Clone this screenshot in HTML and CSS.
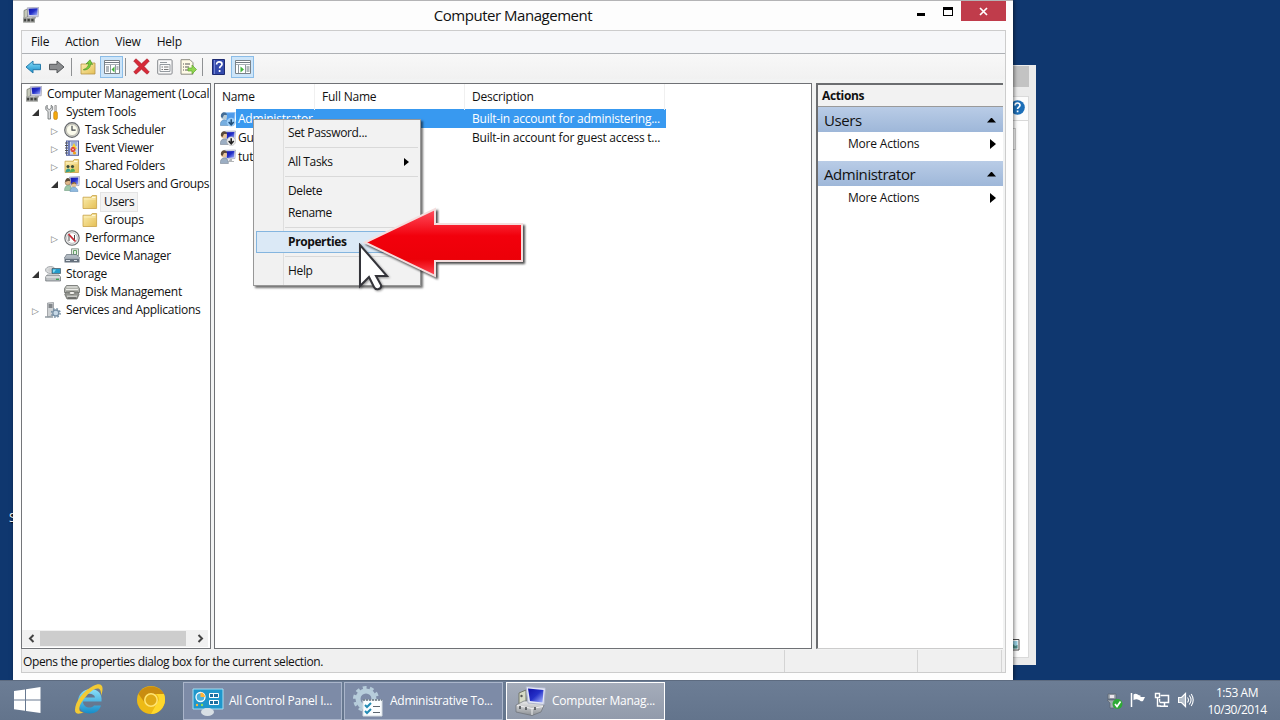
FILE: index.html
```html
<!DOCTYPE html>
<html lang="en">
<head>
<meta charset="utf-8">
<title>Computer Management</title>
<link rel="stylesheet" href="styles.css">
</head>
<body>
<svg class="defs" aria-hidden="true">
  <defs>
    <linearGradient id="screen" x1="0" y1="0" x2="1" y2="1"><stop offset="0" stop-color="#1212a8"/><stop offset=".5" stop-color="#2430c8"/><stop offset="1" stop-color="#a9b8ff"/></linearGradient>
    <linearGradient id="folder" x1="0" y1="0" x2="1" y2="1"><stop offset="0" stop-color="#fbeeb0"/><stop offset="1" stop-color="#e5bf55"/></linearGradient>
    <linearGradient id="red" x1="0" y1="0" x2="0" y2="1"><stop offset="0" stop-color="#ff5060"/><stop offset=".4" stop-color="#f2000c"/><stop offset=".75" stop-color="#ec0008"/><stop offset="1" stop-color="#ff4a58"/></linearGradient>
    <linearGradient id="blue" x1="0" y1="0" x2="0" y2="1"><stop offset="0" stop-color="#8be0fa"/><stop offset="1" stop-color="#168cc8"/></linearGradient>
    <linearGradient id="grey" x1="0" y1="0" x2="0" y2="1"><stop offset="0" stop-color="#ececec"/><stop offset="1" stop-color="#8b8f94"/></linearGradient>
  </defs>
  <symbol id="computer" viewBox="0 0 16 16">
    <path d="M1 3.500l3.500-1.500v8L1 11z" fill="#c6c9ba" stroke="#6c7064" stroke-width=".7"/>
    <path d="M4.300.8L15.800.2 15.200 9.800 5 9.500z" fill="#d5d5e6" stroke="#9294aa" stroke-width=".6"/>
    <path d="M5.500 1.800L14.700 1.200 14.200 8.300 6.300 8z" fill="url(#screen)"/>
    <path d="M9 10h4v1.500H9z" fill="#aaa"/>
    <path d="M.3 10.500h11.400v5.200H.3z" fill="#70736f"/><path d="M.5 10.900h11M.5 15.300h11" stroke="#cfcfcd" stroke-width=".8"/>
    <path d="M1.200 13h2m1.500 0h2m1.500 0h2" stroke="#2e302e" stroke-width="1.600"/><path d="M3.700 11v4m4-4v4" stroke="#bbb" stroke-width=".7"/>
  </symbol>
  <symbol id="tools" viewBox="0 0 16 16">
    <path d="M2.200 1.200v3l2 1.400 2-1.400v-3l1.500 1.400v3L5.500 7.500V15H3V7.500L.8 5.600v-3z" fill="#d7d9da" stroke="#6b6e70" stroke-width=".8"/>
    <path d="M9.800 1.500h1.500v6H9.800z" fill="#dedede" stroke="#777" stroke-width=".6"/><rect x="8.700" y="7.500" width="3.700" height="8" rx="1.600" fill="#f4a90c" stroke="#bd7805" stroke-width=".6"/>
  </symbol>
  <symbol id="clock" viewBox="0 0 16 16"><circle cx="8" cy="8" r="7.300" fill="#d9d8cf" stroke="#66696c" stroke-width="1.200"/><circle cx="8" cy="8" r="5.600" fill="#fbfbec" stroke="#a9aaa0" stroke-width=".6"/><path d="M8 3.700v4.500h3.600" fill="none" stroke="#41464c" stroke-width="1.200"/></symbol>
  <symbol id="event" viewBox="0 0 16 16"><rect x="2.500" y="1" width="12" height="14.300" fill="#ccd8f0" stroke="#5865a0"/><path d="M5 1v14" stroke="#4858a0" stroke-width="1.400"/><path d="M1 3h3M1 5.500h3M1 8h3M1 10.500h3M1 13h3" stroke="#555" stroke-width="1"/><path d="M7 3h6M7 5h6" stroke="#7187be"/><path d="M10 3L13 9H7z" fill="#f7d12e"/><circle cx="9" cy="9.500" r="2.500" fill="#d9332d"/><path d="M8 8.500l2 2m0-2L8 10.500" stroke="#fff" stroke-width=".7"/><circle cx="10.500" cy="13" r="1.600" fill="#f0a31d"/></symbol>
  <symbol id="folder-icon" viewBox="0 0 16 16"><path d="M1 3.200h8l1.200-1.700h4.400v13H1z" fill="url(#folder)" stroke="#c8a146" stroke-width=".8"/><path d="M10 3.400h3.500" stroke="#fffbe4"/><path d="M1.800 5h11.800" stroke="#fff4c3" stroke-width=".8"/></symbol>
  <symbol id="shared" viewBox="0 0 16 16"><use href="#folder-icon"/><circle cx="4" cy="8.500" r="1.600" fill="#3b4a38"/><path d="M1.500 14.500c0-5 5-5 5-1z" fill="#3a9f8c"/><circle cx="8.500" cy="8.500" r="1.600" fill="#3b4a38"/><path d="M6 14.500c0-5 5-5 5-1z" fill="#53ae58"/></symbol>
  <symbol id="group" viewBox="0 0 16 16"><path d="M5.500 1L15.500.5 15 9.500 6 10z" fill="#e4e5f0" stroke="#8790a7" stroke-width=".6"/><path d="M6.500 1.800L14.300 1.500 14 8.500 7 9z" fill="url(#screen)"/><circle cx="3.800" cy="6.500" r="2.700" fill="#dfb789" stroke="#796249" stroke-width=".5"/><path d="M1.200 6c0-5 5-5 5-1L4 5z" fill="#5c4a36"/><path d="M.5 14.500c0-7 7-7 7.500 0z" fill="#9dc6a6" stroke="#5f9173" stroke-width=".5"/><circle cx="9.800" cy="9" r="2.500" fill="#e7c495"/><path d="M7.500 8.500c0-3.500 5-3.500 5 0l-2-1z" fill="#8b673d"/><path d="M6 15.500c0-6 7.500-6 8 0z" fill="#8eb9df" stroke="#5689b6" stroke-width=".5"/></symbol>
  <symbol id="perf" viewBox="0 0 16 16"><circle cx="8" cy="8" r="7.200" fill="#eee" stroke="#65686b" stroke-width="1.100"/><circle cx="8" cy="8" r="5.300" fill="#fff" stroke="#999" stroke-width=".6"/><path d="M5 11V5l5.500 6V5" fill="none" stroke="#333" stroke-width=".9"/><path d="M4.500 4l7 7.500" stroke="#cc2a35" stroke-width="1.700"/></symbol>
  <symbol id="device" viewBox="0 0 16 16"><path d="M7.500.8h7v7h-7z" fill="#e6eee4" stroke="#748277" stroke-width=".8"/><path d="M9.500 2.500h3v4h-3z" fill="none" stroke="#67a269"/><path d="M2.500 6.500h10l3 3.500H.5z" fill="#b2bac2" stroke="#56616c" stroke-width=".6"/><path d="M.5 9.500h15v5H.5z" fill="#66717d"/><path d="M1 10h14M2 12.500h4m4 0h3" stroke="#dce2e8"/></symbol>
  <symbol id="storage" viewBox="0 0 16 16"><ellipse cx="5.500" cy="4" rx="5" ry="3.500" fill="#d8dadb" stroke="#8d9195" stroke-width=".7"/><circle cx="5" cy="4" r="1" fill="#fff" stroke="#888" stroke-width=".4"/><path d="M7 2.500h8.500v5H7z" fill="#249bcb" stroke="#47565e" stroke-width=".7"/><path d="M8 3.500h3l-2 3H8z" fill="#82dcf5"/><path d="M2 9h12l1.500 2v4H.7v-4z" fill="#bcc0c3" stroke="#666b70" stroke-width=".7"/><path d="M1 11h14" stroke="#f3f3f3"/><path d="M11 13.300h3" stroke="#39a34d" stroke-width="1.300"/></symbol>
  <symbol id="disk" viewBox="0 0 16 16"><path d="M2.500 1.500h11l2 3v4H.5v-4z" fill="#b1b3ad" stroke="#6b6d69" stroke-width=".8"/><path d="M2.500 3h11M2 5.500h12" stroke="#ecece8"/><path d="M2 8h12l1 2.500-2 4.500H3L.8 10.500z" fill="#92948f" stroke="#60625d" stroke-width=".7"/><ellipse cx="8" cy="9" rx="3" ry="1.600" fill="#f1f1ed" stroke="#5b5d58" stroke-width=".7"/><path d="M3 12.200h10" stroke="#e3e3df"/><path d="M4 14h8" stroke="#555"/></symbol>
  <symbol id="services" viewBox="0 0 16 16"><path d="M2.500 1l6-.5v13L2.500 15z" fill="#ced1d3" stroke="#888d91" stroke-width=".7"/><path d="M3.500 3h4M3.500 5h4" stroke="#343a40"/><path d="M0 15h8" stroke="#929ba2" stroke-width="1.500"/><circle cx="10.800" cy="11" r="3" fill="#c7d9e7" stroke="#7790a5" stroke-width="1.300"/><circle cx="10.800" cy="11" r="4.300" fill="none" stroke="#7790a5" stroke-dasharray="1.700 1.680" stroke-width="1.400"/></symbol>
  <symbol id="user" viewBox="0 0 16 16"><path d="M4.500 1.300L15.500 1 15 9.500 6 10z" fill="#e8e9f4" stroke="#9299b0" stroke-width=".6"/><path d="M6 2.200L14.500 1.900 14 8.600 6.800 9z" fill="url(#screen)"/><path d="M10 10h2v2h2v1H8z" fill="#b3b6b8"/><circle cx="4" cy="5.500" r="3" fill="#e8c59c"/><path d="M1 6c-1-6 6-6 6-2L4 4 2.500 7z" fill="#5b4a3b"/><path d="M.4 14.500c-1-7 8-8 8 0z" fill="#9caec3" stroke="#6c7886" stroke-width=".5"/></symbol>
  <symbol id="user-off" viewBox="0 0 16 16"><use href="#user"/><circle cx="11.200" cy="11.200" r="4.400" fill="#eee" stroke="#aaa" stroke-width=".5"/><path d="M11.200 8.200v5M8.700 11l2.500 2.700 2.500-2.700" fill="none" stroke="#222" stroke-width="1.600"/></symbol>
  <symbol id="user-selected" viewBox="0 0 16 16"><path d="M4.500 1.300L15.500 1 15 9.500 6 10z" fill="#8fc2f5"/><path d="M6 2.200L14.500 1.900 14 8.600 6.800 9z" fill="#4f9bea"/><circle cx="4" cy="5.500" r="3" fill="#b8cbd6"/><path d="M1 6c-1-6 6-6 6-2L4 4 2.500 7z" fill="#446d96"/><path d="M.4 14.500c-1-7 8-8 8 0z" fill="#76aee0" stroke="#4e81ad" stroke-width=".5"/><circle cx="11.200" cy="11.200" r="4.400" fill="#9bcdf8"/><path d="M11.200 8.200v5M8.700 11l2.500 2.700 2.500-2.700" fill="none" stroke="#22517d" stroke-width="1.600"/></symbol>
  <symbol id="arrow" viewBox="0 0 17 16"><path d="M1 8l7-6v3.300h7.500v5.400H8V14z" stroke-width="1"/></symbol>
  <symbol id="pane" viewBox="0 0 16 16"><path d="M.5 1.500h15v13H.5z" fill="#fff" stroke="#7a8288"/><path d="M1 3.500h14" stroke="#737b83"/><path d="M1 5.500h14" stroke="#a9b1b7"/></symbol>
</svg>

<main class="desktop">
  <span class="shortcut">S</span>
  <section class="back-window">
    <div class="back-top"></div>
    <div class="back-body">
      <div class="back-help"><svg width="15" height="15" viewBox="0 0 15 15"><circle cx="7.500" cy="7.500" r="7.300" fill="#1d6fb8"/><path d="M5 5.500c0-3.300 5-3.300 5-.2 0 1.900-2.400 1.700-2.400 3.700M7.600 10.400v1.800" stroke="#fff" stroke-width="1.700" fill="none"/></svg></div>
      <div class="back-field"></div>
      <svg class="thumb" width="12" height="12" viewBox="0 0 12 12"><path d="M.5.5h10.500v10.500H.5z" fill="#fff" stroke="#4c4c4c"/><path d="M2 2h7.500v7.500H2z" fill="#9ad3e6"/><path d="M2 9l3-4 2 2 2.500-1v3.500H2z" fill="#4d8983"/></svg>
    </div>
  </section>

  <section class="window">
    <header class="titlebar">
      <svg class="i16"><use href="#computer"/></svg>
      <h1>Computer Management</h1>
      <div class="controls">
        <span class="min"></span><span class="max"></span>
        <span class="close"><svg width="9" height="9" viewBox="0 0 9 9"><path d="M1 1l7 7M8 1L1 8" stroke="#fff" stroke-width="1.700"/></svg></span>
      </div>
    </header>
    <div class="frame">
      <nav class="menubar"><span>File</span><span>Action</span><span>View</span><span>Help</span></nav>
      <div class="toolbar">
        <svg class="tool back" width="17" height="16"><use href="#arrow"/></svg>
        <svg class="tool forward" width="17" height="16" viewBox="0 0 17 16"><path d="M16 8L9 2v3.300H1.500v5.400H9V14z"/></svg>
        <i class="divider d1"></i>
        <svg class="tool up" width="16" height="16" viewBox="0 0 16 16"><path d="M1 5h5l1-1h8v11H1z" fill="url(#folder)" stroke="#b69646" stroke-width=".8"/><path d="M3.500 10.500c3.500-1 5-3 5-6l-2.500.5L10 .8l2.500 4.700-2-.5c0 4-3 6-7 6z" fill="#75ce3c" stroke="#50942a" stroke-width=".7"/></svg>
        <span class="toggle"><svg class="i16"><use href="#pane"/><path d="M6.500 6v8M11.500 6v8" stroke="#8f979d"/><path d="M2 8h3M2 10h3M2 12h3M12.500 8h2M12.500 10h2" stroke="#657078"/><path d="M10.500 7.500v6L7.500 10.500z" fill="#42b539" /></svg></span>
        <i class="divider d2"></i>
        <svg class="tool delete" width="17" height="17" viewBox="0 0 17 17"><path d="M3 .8l5.500 5L14 .8l2.300 2.200-5.200 5.500 5.200 5.500-2.300 2.200-5.500-5-5.500 5L.7 14l5.200-5.500L.7 3z" fill="#d62a38" stroke="#a61625" stroke-width=".6"/></svg>
        <svg class="tool props" width="16" height="16" viewBox="0 0 16 16"><rect x=".7" y=".7" width="14.400" height="14.400" rx="1" fill="#fafafa" stroke="#83878b"/><path d="M3 3.500h7M3 5.500h10v7H3z" fill="none" stroke="#949a9f"/><path d="M4.500 8h1.500m1 0h4.500M4.500 10.500H6m1 0h4.500" stroke="#777"/></svg>
        <svg class="tool export" width="17" height="16" viewBox="0 0 17 16"><path d="M1 .7h9l3 3v11.500H1z" fill="#fffbe6" stroke="#8b8b80"/><path d="M3 5h1m1 0h5M3 8h1m1 0h4M3 11h1m1 0h4" stroke="#555"/><path d="M8 9h4V6l4.500 4.500L12 15v-3H8z" fill="#91d650" stroke="#60a72e" stroke-width=".7"/></svg>
        <i class="divider d3"></i>
        <svg class="tool help" width="13" height="16" viewBox="0 0 13 16"><path d="M.5.5h12v15H.5z" fill="#344aac" stroke="#1e2b71"/><path d="M2.500 1v14" stroke="#7183d2"/><path d="M4.600 5.500c0-3.800 5.400-3.300 5.400-.3 0 2-2.400 2-2.400 4M7.600 11v2" fill="none" stroke="#fff" stroke-width="1.700"/></svg>
        <span class="toggle"><svg class="i16"><use href="#pane"/><path d="M3.500 6v8M10.500 6v8" stroke="#8f979d"/><path d="M11.500 8h3M11.500 10h3M11.500 12h3" stroke="#657078"/><path d="M5.500 7.500v6l3.500-3z" fill="#42b539"/></svg></span>
      </div>

      <div class="panes">
        <aside class="tree">
          <ul>
            <li class="l0"><svg class="i16"><use href="#computer"/></svg><span>Computer Management (Local</span></li>
            <li class="l1"><i class="open"></i><svg class="i16"><use href="#tools"/></svg><span>System Tools</span></li>
            <li class="l2"><i class="shut"></i><svg class="i16"><use href="#clock"/></svg><span>Task Scheduler</span></li>
            <li class="l2"><i class="shut"></i><svg class="i16"><use href="#event"/></svg><span>Event Viewer</span></li>
            <li class="l2"><i class="shut"></i><svg class="i16"><use href="#shared"/></svg><span>Shared Folders</span></li>
            <li class="l2 tight"><i class="open"></i><svg class="i16"><use href="#group"/></svg><span>Local Users and Groups</span></li>
            <li class="l3 current"><svg class="i16"><use href="#folder-icon"/></svg><span>Users</span></li>
            <li class="l3"><svg class="i16"><use href="#folder-icon"/></svg><span>Groups</span></li>
            <li class="l2"><i class="shut"></i><svg class="i16"><use href="#perf"/></svg><span>Performance</span></li>
            <li class="l2"><i></i><svg class="i16"><use href="#device"/></svg><span>Device Manager</span></li>
            <li class="l1"><i class="open"></i><svg class="i16"><use href="#storage"/></svg><span>Storage</span></li>
            <li class="l2"><i></i><svg class="i16"><use href="#disk"/></svg><span>Disk Management</span></li>
            <li class="l1"><i class="shut"></i><svg class="i16"><use href="#services"/></svg><span>Services and Applications</span></li>
          </ul>
          <div class="scrollbar">
            <svg width="18" height="15" viewBox="0 0 18 15"><path d="M11.500 4L8 7.500 11.500 11" fill="none" stroke="#444" stroke-width="2"/></svg>
            <div class="track"><div class="handle"></div></div>
            <svg width="18" height="15" viewBox="0 0 18 15"><path d="M8.500 4L12 7.500 8.500 11" fill="none" stroke="#444" stroke-width="2"/></svg>
          </div>
        </aside>

        <section class="list">
          <div class="row head"><span>Name</span><span>Full Name</span><span>Description</span></div>
          <div class="row selected"><span class="name"><svg class="i16"><use href="#user-selected"/></svg><b>Administrator</b></span><span></span><span>Built-in account for administering...</span></div>
          <div class="row"><span class="name"><svg class="i16"><use href="#user-off"/></svg><b>Guest</b></span><span></span><span>Built-in account for guest access t...</span></div>
          <div class="row"><span class="name"><svg class="i16"><use href="#user"/></svg><b>tutorial</b></span><span></span><span></span></div>
        </section>

        <aside class="actions">
          <h2>Actions</h2>
          <h3><span>Users</span><i class="up-mark"></i></h3>
          <p><span>More Actions</span><i class="right-mark"></i></p>
          <h3><span>Administrator</span><i class="up-mark"></i></h3>
          <p><span>More Actions</span><i class="right-mark"></i></p>
        </aside>
      </div>
      <footer class="status"><span class="message">Opens the properties dialog box for the current selection.</span><span class="cell"></span><span class="cell last"></span></footer>
    </div>
  </section>

  <div class="context-menu">
    <div class="item">Set Password...</div><hr>
    <div class="item">All Tasks<i class="right-mark small"></i></div><hr>
    <div class="item">Delete</div>
    <div class="item">Rename</div><hr>
    <div class="item default">Properties</div><hr>
    <div class="item">Help</div>
  </div>

  <svg class="pointer-arrow" width="176" height="82" viewBox="0 0 176 82">
    <path d="M7 37.500L77 4v15h87v37H77v15z" fill="url(#red)" stroke="#f4dede" stroke-width="2"/>
  </svg>
  <svg class="cursor" width="34" height="50" viewBox="0 0 34 50">
    <path d="M2 2v41l9-9 5 10c2 4 8 2 7-2l-5-9h11z" fill="#fff" stroke="#34343a" stroke-width="2"/>
  </svg>

  <footer class="taskbar">
    <svg class="start" width="27" height="27" viewBox="0 0 27 27"><path d="M0 4l11-1.600v10.100H0zM12 2.200L26.500 0v12.500H12zM0 13.500h11v10.300L0 22.300zM12 13.500h14.500V26L12 24z" fill="#fff"/></svg>
    <svg class="ie" width="30" height="32" viewBox="0 0 30 32"><path d="M9 18.500h18.500C28.500 10 23 6 16.500 6S4 11 4 18.500 9 30.500 16 30.500c5.500 0 9.500-3 11-8h-7c-3 4-11 2-11-4z" fill="url(#blue)"/><path d="M10 14.500h11c-1-5-10-5-11 0z" fill="#66778f"/><path d="M27 13C31 2 27-1 19 3 9 8 1 19 1 27c0 5 5 4 9 2-7 1.500-6-7 2-15.500C19 5 28 1 27 13z" fill="#f2ca35"/></svg>
    <svg class="chrome" width="30" height="30" viewBox="0 0 30 30"><circle cx="15" cy="15" r="14" fill="#edba15"/><path d="M2.500 9C7-1 23-1 28 9H15c-5 0-8 4-6 9z" fill="#c98c10"/><path d="M15 29l6-11c3-3 2-7-1-9h8c4 10-4 20-13 20z" fill="#ffd82c"/><circle cx="15" cy="15" r="6.200" fill="#dfa915" stroke="#ffe472" stroke-width="1.500"/></svg>
    <div class="tasks">
      <div class="task">
        <svg width="32" height="32" viewBox="0 0 32 32"><path d="M1 4h30v20H1z" fill="#1f96cb" stroke="#a6def3"/><circle cx="8.500" cy="12" r="4.500" fill="#4ab1dc" stroke="#fff" stroke-width="1.300"/><path d="M8.500 12V7.500a4.500 4.500 0 014.500 4.500z" fill="#ffb436"/><path d="M17.500 8.500h9v4h-9zM17.500 15.500h9v4h-9z" fill="#1d6e9f" stroke="#fff"/><path d="M21.500 8.500v4m0 3v4" stroke="#fff"/><circle cx="5" cy="20" r="1.200" fill="#ffb436"/><circle cx="10" cy="20" r="1.200" fill="#92df58"/><path d="M13 23h5l1 3H12z" fill="#c2d1da"/><ellipse cx="15.500" cy="27" rx="6.500" ry="4" fill="#d8dfe4"/></svg>
        <span>All Control Panel I...</span>
      </div>
      <div class="task">
        <svg width="32" height="32" viewBox="0 0 32 32"><circle cx="13" cy="14" r="8" fill="none" stroke="#b7cddb" stroke-width="5"/><circle cx="13" cy="14" r="11.500" fill="none" stroke="#b7cddb" stroke-width="3" stroke-dasharray="3.800 3.430"/><path d="M10 15h19v16H10z" fill="#fafdff" stroke="#d6dde2"/><path d="M10 15h19" stroke="#677680" stroke-width="1.500" stroke-dasharray="2 1"/><path d="M12 20l2 2 4-4m-6 8l2 2 4-4" fill="none" stroke="#248bb4" stroke-width="2"/><path d="M20 21.500h7m-7 6h7" stroke="#5b6670"/></svg>
        <span>Administrative To...</span>
      </div>
      <div class="task active">
        <svg width="32" height="32" viewBox="0 0 32 32"><path d="M4 8l7-3v14l-7 3z" fill="#d8dcc7" stroke="#72776a"/><circle cx="6.500" cy="11" r="1.200" fill="#555"/><path d="M1 20l8-4h15l5 4-3 7-9 3.500L1 27z" fill="url(#grey)" stroke="#6b7077" stroke-width=".7"/><path d="M2 20.500l15 3 11-2M17 24v6" stroke="#f1f1f1" fill="none"/><path d="M5 21v3m6-2v3m9-3v3" stroke="#45494d" stroke-width="1.500"/><path d="M11 1.500L30.500 3 29 19.500 13 18z" fill="#e5e8f5" stroke="#aeb5cb"/><path d="M13 3.500L28.500 5 27.500 17.500 15 16z" fill="url(#screen)"/></svg>
        <span>Computer Manag...</span>
      </div>
    </div>
    <div class="tray">
      <svg width="17" height="18" viewBox="0 0 17 18"><path d="M2 2h8v5H2zM1 8h9l-2 3v5H4v-5z" fill="#a3abb2" stroke="#59636e" stroke-width=".7"/><path d="M4 3h4v3H4z" fill="#ece6ee"/><circle cx="11.500" cy="12" r="5" fill="#2eaa35"/><path d="M9 12l2 2.500 3.500-5" stroke="#fff" stroke-width="1.700" fill="none"/></svg>
      <svg width="17" height="16" viewBox="0 0 17 16"><path d="M1.500 1v14" stroke="#fff" stroke-width="1.500"/><path d="M3.500 2.500c3-2 4 1 7 1v1.500h4.500l-2 4c-2 1-3-.5-4-1-2-1-3-1-5.500 0z" fill="#fff"/></svg>
      <svg width="17" height="16" viewBox="0 0 17 16"><path d="M6.500 3.500h8v7h-9V7M10.500 11v3M6 14.300h8" fill="none" stroke="#fff" stroke-width="1.500"/><path d="M1.500 1.500h4v4h-4zM3.500 5.500V14H7" fill="#68778b" stroke="#fff" stroke-width="1.400"/></svg>
      <svg width="17" height="16" viewBox="0 0 17 16"><path d="M.5 5.500h3L7.500 1.500v13l-4-4h-3z" fill="#b3bdc9" stroke="#fff" stroke-width="1.200"/><path d="M9.500 5.500q2 2.500 0 5M11.300 3.500q3.500 4.500 0 9M13.200 2q4 6 0 12" fill="none" stroke="#fff" stroke-width="1.100"/></svg>
    </div>
    <div class="clock"><span>1:53 AM</span><span>10/30/2014</span></div>
  </footer>
</main>
</body>
</html>
```
FILE: styles.css
```css
* { box-sizing: border-box; }
body { margin: 0; overflow: hidden; font: 12px/18px "Open Sans", "Noto Sans", sans-serif; letter-spacing: -0.28px; color: #111; }
.defs { position: absolute; width: 0; height: 0; }
svg { display: block; flex: none; }
h1, h2, h3, p, ul { margin: 0; padding: 0; font-weight: normal; }
.i16 { width: 16px; height: 16px; }
.desktop { position: relative; width: 1280px; height: 720px; overflow: hidden; background: #0f376f; white-space: nowrap; }
.shortcut { position: absolute; left: 9px; top: 509px; color: #fff; text-shadow: 1px 1px 1px #000; }

.back-window { position: absolute; left: 1000px; top: 65px; width: 36px; height: 600px; padding-right: 7px; background: #ebebeb; }
.back-top { height: 21px; margin-top: 1px; background: #c3c3c3; }
.back-body { display: flex; flex-direction: column; height: 562px; margin-top: 9px; background: #fff; border: 1px solid #dadada; padding-left: 9px; }
.back-help { height: 24px; margin-left: -9px; padding: 3px 0 0 9px; border-bottom: 1px solid #d9d9d9; background: #fcfcfc; }
.back-field { width: 6px; height: 22px; margin-top: 7px; border: 1px solid #d0d0d0; }
.thumb { margin: auto 0 6px -2px; }

.window { position: absolute; left: 13px; top: 0; width: 1000px; height: 680px; padding: 0 8px; background: #fdfdfd; border-top: 1px solid #b4b4b6; box-shadow: 1px 0 4px rgba(0,0,0,.55); }
.titlebar { display: flex; height: 29px; padding-left: 2px; }
.titlebar .i16 { margin-top: 6px; }
.titlebar h1 { flex: 1; padding: 4px 0 0 70px; text-align: center; font-size: 15px; line-height: 20px; letter-spacing: -0.47px; }
.controls { display: flex; }
.min { width: 8px; height: 3px; margin: 12px 18px 0 0; background: #000; }
.max { width: 10px; height: 9px; margin: 6px 8px 0 0; border: 1px solid #000; border-top-width: 3px; }
.close { display: grid; place-items: center; width: 45px; height: 20px; margin-right: -1px; background: #c03c4b; }

.frame { display: flex; flex-direction: column; height: 643px; border: 1px solid #ccc; background: #f2f3f3; margin-right: -1px; }
.menubar { display: flex; flex: none; height: 23px; padding: 2px 9px 0; gap: 16px; border-bottom: 1px solid #aeb1b5; background: #f6f7f9; letter-spacing: -0.2px; }
.toolbar { display: flex; flex: none; align-items: center; height: 25px; padding-left: 3px; background: linear-gradient(#f8f8f8, #f1f1f1); }
.back { fill: url(#blue); stroke: #267baa; }
.forward { fill: #8b8d8f; stroke: #55585b; margin-left: 6px; }
.divider { width: 1px; height: 18px; background: #8f9193; }
.d1 { margin: 0 8px 0 6px; }
.up { margin-right: 4px; }
.toggle { display: grid; place-items: center; width: 23px; height: 22px; background: #cde5f9; border: 1px solid #8bbde8; }
.d2 { margin: 0 7px 0 2px; }
.props { margin-left: 7px; }
.export { margin-left: 7px; }
.d3 { margin: 0 9px 0 5px; }
.help { margin-right: 6px; }

.panes { display: flex; flex: none; height: 566px; margin: 4px 0 0 -1px; }
.tree { display: flex; flex-direction: column; width: 190px; border: 1px solid #74767a; background: #fff; overflow: hidden; }
.tree ul { flex: 1; list-style: none; padding-top: 1px; }
.tree li { display: flex; align-items: center; height: 18px; }
.tree li > span { margin-left: 5px; }
.tree .l0 { padding-left: 4px; }
.tree .l1 { padding-left: 9px; }
.tree .l2 { padding-left: 28px; }
.tree .l3 { padding-left: 60px; }
.tree .tight { letter-spacing: -0.4px; }
.tree i { flex: none; width: 14px; height: 8px; }
.tree .l3 > span { margin-left: 3px; padding: 0 3px; }
.tree .current > span { background: #f3f3f3; box-shadow: 0 0 0 1px #e4e4e4; }
.open::before { content: ""; display: block; width: 7px; height: 7px; margin: 1px 0 0 1px; background: #333; clip-path: polygon(100% 0, 100% 100%, 0 100%); }
.shut::before { content: "▷"; display: block; padding: 1px 0 0 1px; font: 9px/9px "DejaVu Sans", sans-serif; color: #777; }
.scrollbar { display: flex; height: 17px; margin: 0 2px 1px 0; background: #f1f1f1; align-items: center; }
.track { flex: 1; }
.handle { width: 146px; height: 15px; background: #cdcdcd; }

.list { width: 598px; margin-left: 3px; border: 1px solid #6f7175; background: #fff; }
.row { display: grid; grid-template-columns: 100px 150px 200px; width: 451px; height: 19px; line-height: 19px; letter-spacing: -0.22px; }
.row > span { padding-left: 7px; }
.row.head { height: 25px; line-height: 26px; }
.row.head > span { border-right: 1px solid #f0f0f0; }
.row > .name { display: flex; align-items: center; padding-left: 5px; }
.name b { font-weight: normal; margin-left: 2px; }
.row.selected { color: #fff; background: linear-gradient(90deg, #fff 21px, #3899f0 21px); }

.actions { width: 187px; margin-left: 4px; border-left: 2px solid #6b6d70; border-top: 2px solid #6b6d70; border-bottom: 1px solid #ccc; background: #fff; }
.actions h2 { height: 22px; padding: 2px 4px; font-size: 12px; font-weight: bold; letter-spacing: -0.35px; background: #f2f2f2; border-bottom: 1px solid #9a9a9a; }
.actions h3 { display: flex; justify-content: space-between; align-items: center; height: 25px; padding: 1px 7px 0 6px; font-size: 15px; letter-spacing: -0.43px; background: linear-gradient(#b9cce6, #9eb7d9); }
.actions p { display: flex; justify-content: space-between; height: 29px; padding: 3px 7px 0 30px; letter-spacing: -0.2px; }
.up-mark { width: 9px; height: 5px; background: #000; clip-path: polygon(50% 0, 100% 100%, 0 100%); }
.right-mark { width: 6px; height: 10px; margin-top: 4px; background: #000; clip-path: polygon(0 0, 100% 50%, 0 100%); }

.status { display: flex; flex: 1; margin-top: 1px; line-height: 23px; background: #f0f0f0; }
.message { width: 763px; height: 22px; padding-left: 1px; border-right: 1px solid #d4d4d4; letter-spacing: -0.37px; }
.cell { width: 133px; border-right: 1px solid #d4d4d4; }
.cell.last { width: 84px; }

.context-menu { position: absolute; left: 253px; top: 119px; width: 168px; height: 167px; padding: 2px; border: 1px solid #979797; background: linear-gradient(90deg, #f1f1f1 29px, #dedede 29px, #dedede 30px, #f2f2f2 30px); box-shadow: 2px 2px 2px rgba(0,0,0,.55); }
.item { display: flex; justify-content: space-between; height: 22px; padding: 0 9px 0 32px; line-height: 22px; letter-spacing: -0.35px; }
.context-menu hr { height: 1px; margin: 3px 0 3px 29px; border: 0; background: #d9d9d9; }
.item.default { font-weight: bold; padding-left: 31px; border: 1px solid #84b5df; background: #dbe9f6; line-height: 20px; letter-spacing: -0.4px; }
.right-mark.small { width: 5px; height: 8px; margin-top: 7px; }
.pointer-arrow { position: absolute; left: 358px; top: 205px; filter: drop-shadow(2px 2px 1px rgba(0,0,0,.7)); }
.cursor { position: absolute; left: 358px; top: 243px; filter: drop-shadow(1px 1px 1px rgba(0,0,0,.4)); }

.taskbar { position: absolute; left: 0; top: 680px; display: flex; align-items: center; width: 1280px; height: 40px; border-top: 1px solid #5d6b80; background: linear-gradient(#6c7d95, #63748c); color: #fff; }
.start { margin-left: 14px; }
.ie { margin: -4px 0 0 33px; }
.chrome { margin: -2px 0 0 32px; }
.tasks { display: flex; gap: 2px; margin-left: 17px; }
.task { display: flex; align-items: center; gap: 5px; width: 159px; height: 38px; padding-left: 9px; border: 1px solid #aab5ca; background: #7d8ba7; }
.task.active { background: linear-gradient(#a5acba, #919aab); border-color: #fff; margin-left: 1px; }
.task svg { margin-left: -1px; }
.task span { letter-spacing: -0.24px; }
.tray { display: flex; gap: 7px; margin-left: 441px; }
.clock { display: flex; flex-direction: column; align-items: center; width: 66px; margin-left: 9px; line-height: 17px; letter-spacing: -0.45px; }
```
